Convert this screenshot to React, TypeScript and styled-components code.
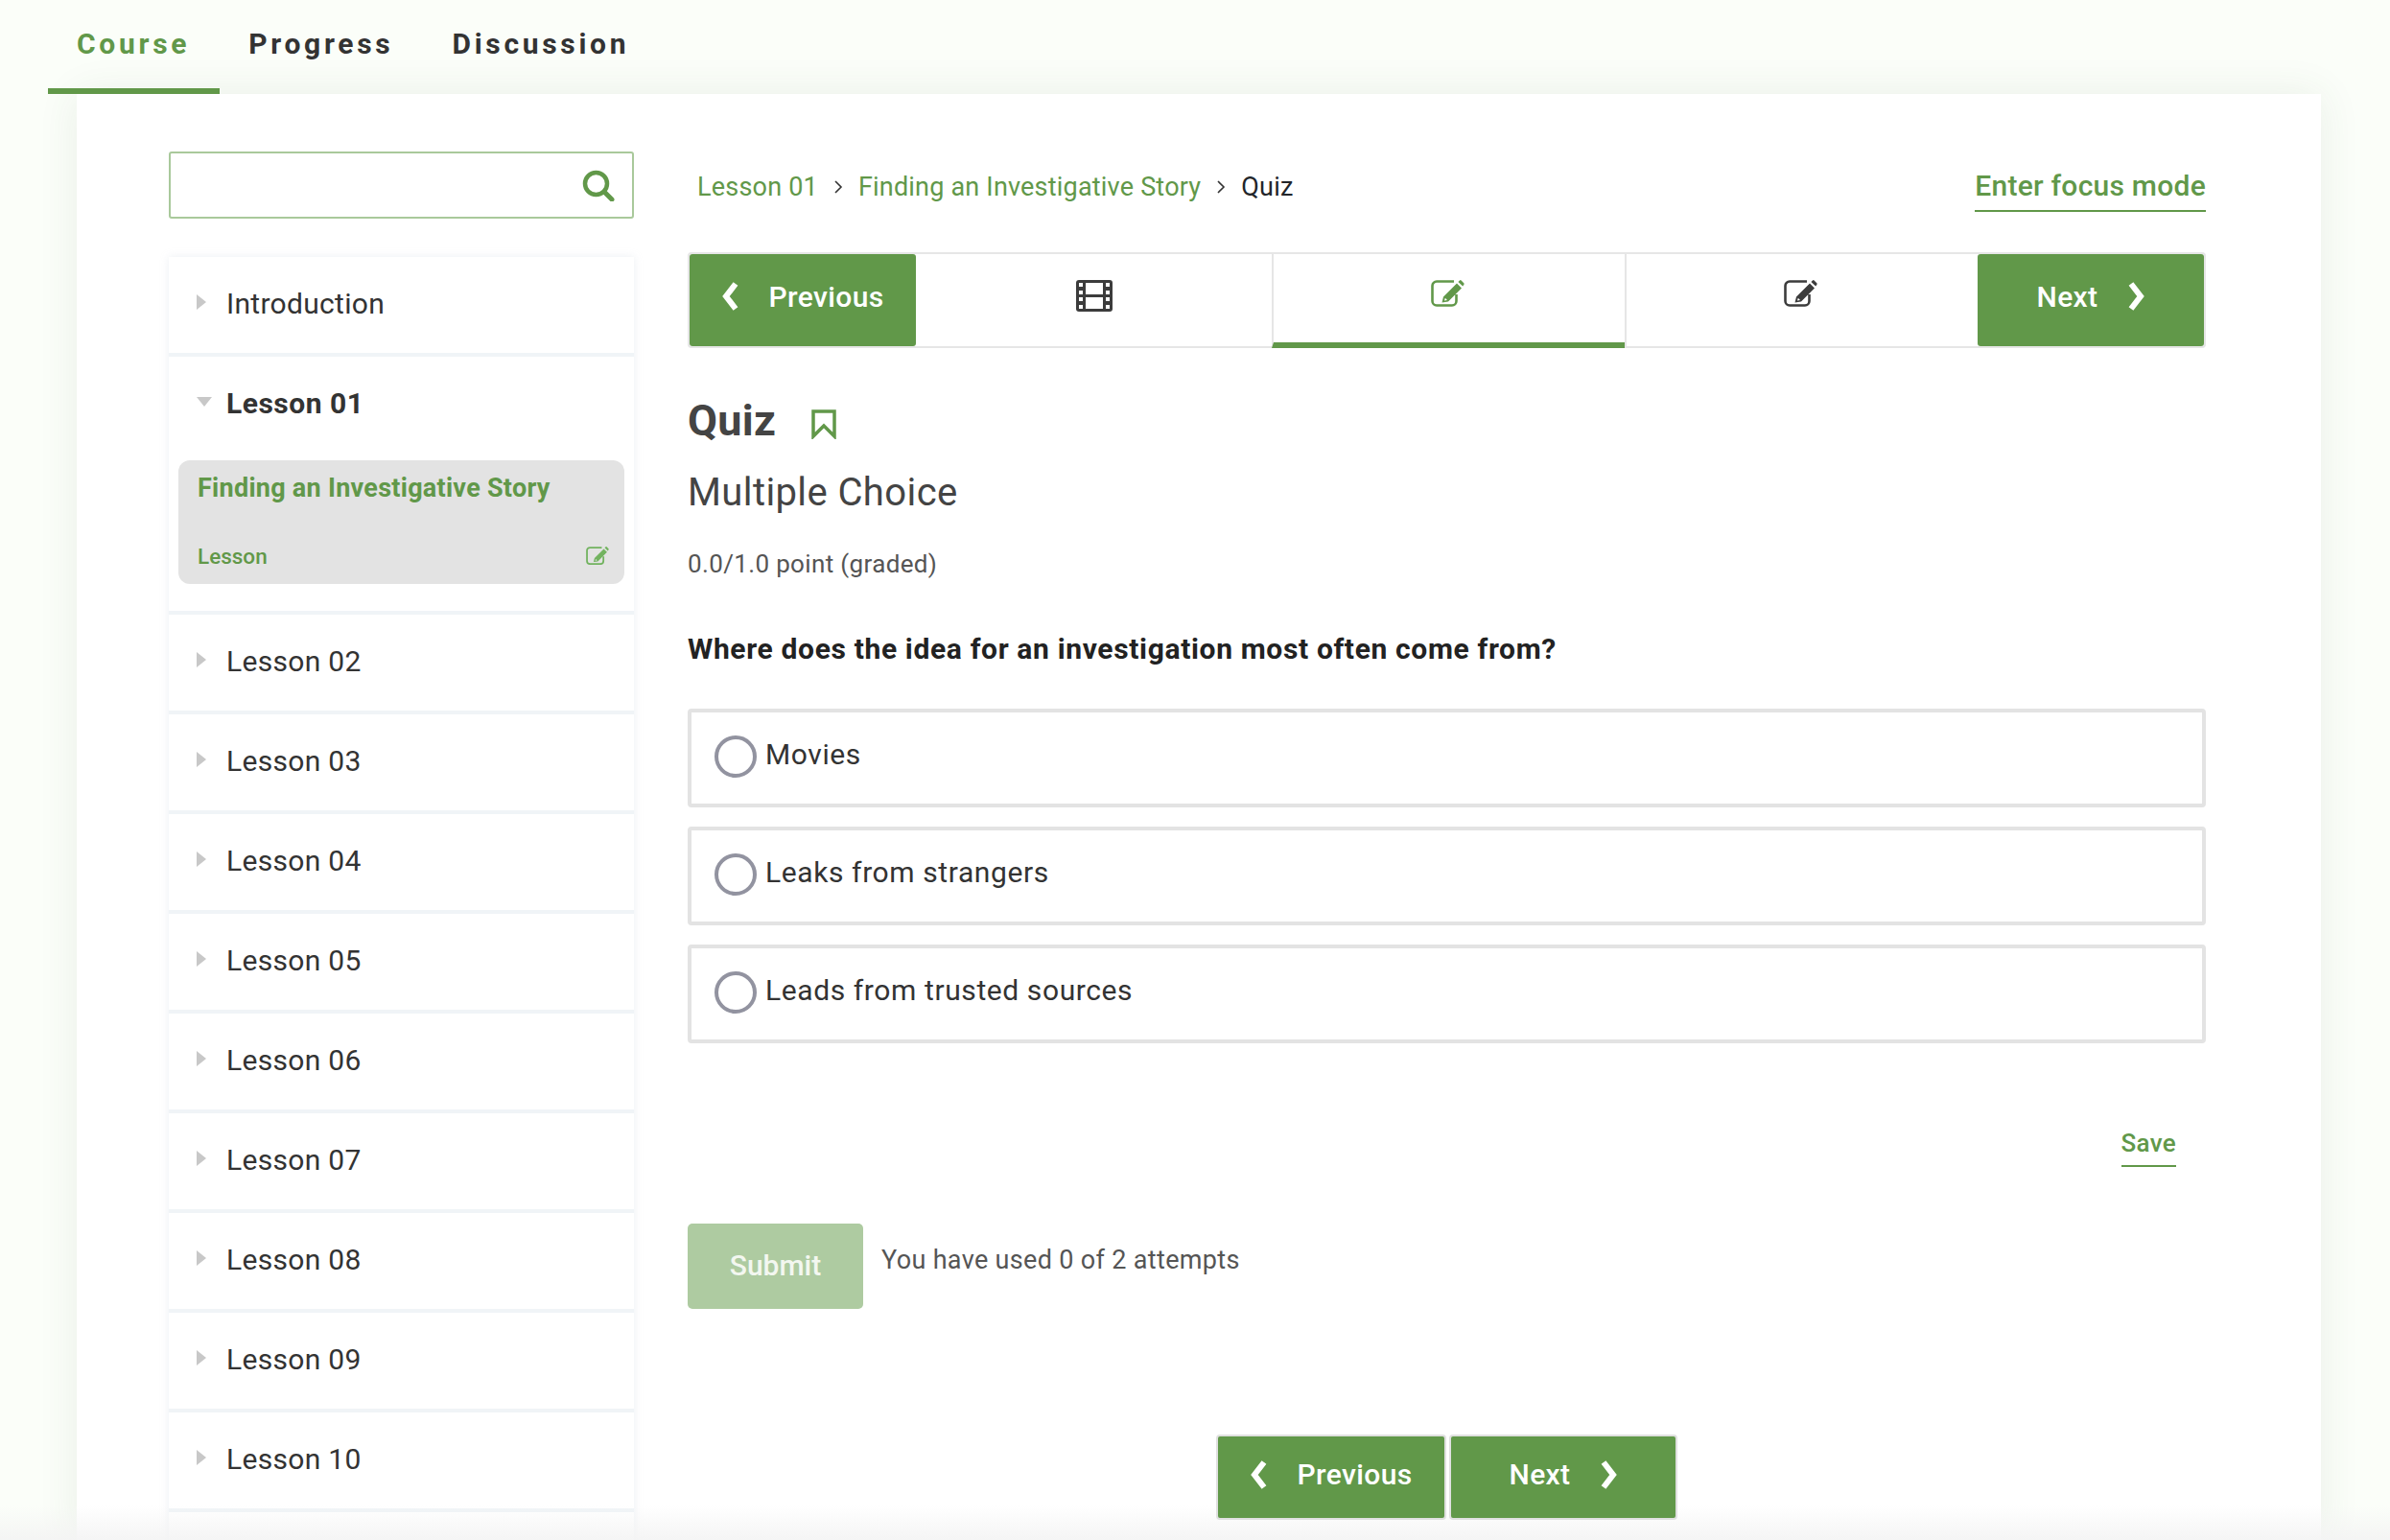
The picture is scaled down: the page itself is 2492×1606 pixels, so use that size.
import React from 'react'
import styled, { createGlobalStyle } from 'styled-components'

const green = '#619849'
const dark = '#333333'

const GlobalStyle = createGlobalStyle`
  html, body {
    margin: 0;
    padding: 0;
    background: #fbfef9;
    font-family: Roboto, "Liberation Sans", sans-serif;
  }
  * {
    box-sizing: border-box;
  }
`

const Page = styled.div`
  position: relative;
  height: 1606px;
  overflow: hidden;
`

const BottomFade = styled.div`
  position: absolute;
  left: 0;
  right: 0;
  bottom: 0;
  height: 36px;
  background: linear-gradient(rgba(243, 243, 243, 0), rgba(243, 243, 243, 0.85));
  pointer-events: none;
`

const TabBar = styled.nav`
  position: relative;
  z-index: 1;
  display: flex;
  height: 98px;
  padding-left: 50px;
`

const Tab = styled.a<{ $active?: boolean }>`
  display: block;
  height: 98px;
  padding: 26px 31px 0 30px;
  font-size: 30px;
  line-height: 40px;
  font-weight: 700;
  letter-spacing: 3.7px;
  color: ${({ $active }) => ($active ? green : dark)};
  border-bottom: 6px solid ${({ $active }) => ($active ? green : 'transparent')};
`

const Panel = styled.div`
  display: flex;
  gap: 56px;
  margin: 0 72px 0 80px;
  padding: 60px 120px 0 96px;
  height: 1508px;
  background: #ffffff;
  box-shadow: 0 0 40px rgba(60, 90, 60, 0.09);
`

const Sidebar = styled.aside`
  flex: 0 0 485px;
`

const SearchBox = styled.div`
  display: flex;
  align-items: center;
  height: 70px;
  padding-right: 18px;
  border: 2px solid #a9c99b;
  border-radius: 3px;
`

const SearchInput = styled.input`
  flex: 1;
  min-width: 0;
  height: 100%;
  border: none;
  outline: none;
  background: transparent;
`

const LessonList = styled.div`
  display: flex;
  flex-direction: column;
  gap: 4px;
  margin-top: 40px;
  background: #f0f4f7;
  box-shadow: 0 0 8px rgba(200, 210, 220, 0.35);
`

const LessonItem = styled.div`
  min-height: 100px;
  background: #ffffff;
`

const LessonHead = styled.div<{ $open?: boolean }>`
  display: flex;
  align-items: center;
  height: 96px;
  padding-left: 29px;
  font-size: 30px;
  font-weight: ${({ $open }) => ($open ? 700 : 400)};
  letter-spacing: ${({ $open }) => ($open ? '0.5px' : '0.3px')};
  color: ${dark};
`

const Caret = styled.span<{ $open?: boolean }>`
  flex: 0 0 0;
  width: 0;
  height: 0;
  margin-top: -3px;
  border-style: solid;
  border-color: transparent;
  ${({ $open }) =>
    $open
      ? `border-width: 10px 8px 0 8px; border-top-color: #c8c8c8; margin-right: 15px;`
      : `border-width: 8.5px 0 8.5px 10px; border-left-color: #c8c8c8; margin-right: 21px;`}
`

const ActiveUnit = styled.div`
  margin: 12px 10px 28px;
  height: 129px;
  padding: 11px 16px 0 20px;
  border-radius: 12px;
  background: #e3e3e3;
`

const UnitTitle = styled.div`
  font-size: 27px;
  line-height: 36px;
  font-weight: 700;
  letter-spacing: 0.27px;
  color: ${green};
`

const UnitFoot = styled.div`
  display: flex;
  justify-content: space-between;
  align-items: flex-start;
  margin-top: 36px;
  font-size: 22.5px;
  line-height: 34px;
  font-weight: 500;
  color: ${green};
`

const UnitIcon = styled.span`
  display: block;
  margin-top: 1px;
  color: #72b35f;
`

const Main = styled.main`
  flex: 1;
  min-width: 0;
`

const HeaderRow = styled.div`
  display: flex;
  justify-content: space-between;
  align-items: center;
  height: 74px;
  margin-bottom: 31px;
  padding-left: 10px;
`

const Crumbs = styled.div`
  display: flex;
  align-items: center;
  font-size: 27px;
  letter-spacing: 0.2px;
  color: ${green};
`

const CrumbSep = styled.svg`
  width: 10px;
  height: 16px;
  margin: 0 16px;
  fill: none;
  stroke: ${dark};
  stroke-width: 1.6;
`

const CrumbCurrent = styled.span`
  color: #22252a;
`

const FocusLink = styled.a`
  display: block;
  font-size: 30px;
  line-height: 44px;
  font-weight: 500;
  letter-spacing: 0.25px;
  color: ${green};
  padding: 2px 0 3px;
  border-bottom: 2px solid ${green};
`

const Strip = styled.div`
  display: grid;
  grid-template-columns: 236px 371px 368px 1fr 236px;
  height: 100px;
  border: 2px solid #e6e6e6;
  border-radius: 4px;
`

const NavButton = styled.a`
  display: flex;
  justify-content: center;
  align-items: center;
  gap: 30px;
  padding-bottom: 8px;
  background: ${green};
  border-radius: 3px;
  color: #ffffff;
  font-size: 30px;
  font-weight: 500;
  letter-spacing: 0.4px;
`

const StripCell = styled.a<{ $active?: boolean; $first?: boolean }>`
  display: flex;
  justify-content: center;
  padding: 27px ${({ $first }) => ($first ? '0' : '4px')} 0 0;
  color: ${({ $active }) => ($active ? green : '#3c3c3c')};
  border-left: ${({ $first }) => ($first ? 'none' : '2px solid #e6e6e6')};
  ${({ $active }) =>
    $active ? `border-bottom: 6px solid ${green}; margin-bottom: -2px;` : ''}
`

const Chevron = styled.svg`
  flex: 0 0 19px;
  width: 19px;
  height: 30px;
  fill: none;
  stroke: #ffffff;
  stroke-width: 6;
`

const Title = styled.h1`
  display: flex;
  align-items: center;
  gap: 36px;
  margin: 50px 0 0;
  font-size: 45px;
  line-height: 52px;
  font-weight: 700;
  letter-spacing: 0.3px;
  color: #444444;
`

const Bookmark = styled.svg`
  width: 28px;
  height: 31px;
  margin-top: 6px;
  fill: none;
  stroke: ${green};
  stroke-width: 3.5;
`

const Subtitle = styled.h2`
  margin: 25px 0 0;
  font-size: 40px;
  line-height: 48px;
  font-weight: 400;
  letter-spacing: 0.4px;
  color: #444444;
`

const Score = styled.div`
  margin-top: 34px;
  font-size: 26px;
  line-height: 32px;
  letter-spacing: 0.35px;
  color: #555555;
`

const Question = styled.div`
  margin-top: 53px;
  font-size: 30px;
  line-height: 40px;
  font-weight: 700;
  letter-spacing: 0.65px;
  color: #222222;
`

const Options = styled.div`
  display: flex;
  flex-direction: column;
  gap: 20px;
  margin-top: 42px;
`

const Option = styled.label`
  display: flex;
  align-items: flex-start;
  gap: 9px;
  height: 103px;
  padding: 24px 0 0 24px;
  border: 4px solid #e3e3e3;
  border-radius: 4px;
  font-size: 30px;
  line-height: 40px;
  letter-spacing: 0.6px;
  color: ${dark};
`

const Radio = styled.span`
  flex: 0 0 44px;
  height: 44px;
  border: 4px solid #9293a0;
  border-radius: 50%;
`

const SaveRow = styled.div`
  display: flex;
  justify-content: flex-end;
  margin-top: 87px;
  padding-right: 31px;
`

const SaveLink = styled.a`
  display: block;
  font-size: 26px;
  line-height: 34px;
  font-weight: 500;
  letter-spacing: 0.3px;
  color: ${green};
  padding-bottom: 6px;
  border-bottom: 2px solid ${green};
`

const SubmitRow = styled.div`
  display: flex;
  align-items: flex-start;
  gap: 19px;
  margin-top: 59px;
`

const SubmitButton = styled.button`
  width: 183px;
  height: 89px;
  padding: 0 0 3px;
  border: none;
  border-radius: 5px;
  background: #aecba1;
  color: #f3f7f0;
  font-family: inherit;
  font-size: 30px;
  font-weight: 500;
`

const Attempts = styled.span`
  margin-top: 21px;
  font-size: 27px;
  line-height: 34px;
  letter-spacing: 0.33px;
  color: #555555;
`

const BottomNav = styled.div`
  position: relative;
  z-index: 2;
  display: flex;
  justify-content: center;
  gap: 3px;
  margin-top: 131px;
`

const BottomButton = styled(NavButton)`
  width: 240px;
  height: 89px;
  border: 2px solid #e0e0e0;
  border-radius: 4px;
  padding-bottom: 6px;
`

const BottomButtonNext = styled(BottomButton)`
  width: 238px;
`

const lessons = ['02', '03', '04', '05', '06', '07', '08', '09', '10']

const ChevronLeft = () => (
  <Chevron viewBox="0 0 19 30">
    <path d="M15 2 L5 15 L15 28" />
  </Chevron>
)

const ChevronRight = () => (
  <Chevron viewBox="0 0 19 30">
    <path d="M4 2 L14 15 L4 28" />
  </Chevron>
)

const SearchIcon = () => (
  <svg width="34" height="33" viewBox="0 0 34 33" fill="none" stroke={green}>
    <circle cx="14.5" cy="14.5" r="11.5" strokeWidth="4.5" />
    <path d="M23 23 L31 31" strokeWidth="5" strokeLinecap="round" />
  </svg>
)

const FilmIcon = () => (
  <svg width="38" height="33" viewBox="0 0 38 33">
    <rect width="38" height="33" rx="3" fill="#3c3c3c" />
    <g fill="#ffffff">
      <rect x="3" y="3" width="4" height="4" />
      <rect x="3" y="11" width="4" height="4" />
      <rect x="3" y="18" width="4" height="4" />
      <rect x="3" y="26" width="4" height="4" />
      <rect x="31" y="3" width="4" height="4" />
      <rect x="31" y="11" width="4" height="4" />
      <rect x="31" y="18" width="4" height="4" />
      <rect x="31" y="26" width="4" height="4" />
      <rect x="10" y="3" width="18" height="12" />
      <rect x="10" y="18" width="18" height="12" />
    </g>
  </svg>
)

// pencil-in-square, drawn because the package versions have a thin pencil
const EditIcon = ({ width = 35 }: { width?: number }) => (
  <svg width={width} height={(width * 28) / 35} viewBox="0 0 35 28">
    <path
      d="M24 1.5 H6 a4.5 4.5 0 0 0 -4.5 4.5 V22 a4.5 4.5 0 0 0 4.5 4.5 H22 a4.5 4.5 0 0 0 4.5 -4.5 V15"
      fill="none"
      stroke="currentColor"
      strokeWidth="2.6"
    />
    <path
      fillRule="evenodd"
      fill="currentColor"
      d="M27 3.5 L32 8.5 L18 22.5 L11.5 23.5 L13 17.5 Z M14.8 18.8 L14 21.5 L17 21 Z"
    />
    <path fill="currentColor" d="M28.4 2 L30 .4 Q30.8 -.2 31.6 .5 L34.3 3.2 Q35 4 34.4 4.8 L33.2 6.6 Z" />
  </svg>
)

export default function App() {
  return (
    <Page>
      <GlobalStyle />
      <TabBar>
        <Tab $active>Course</Tab>
        <Tab>Progress</Tab>
        <Tab>Discussion</Tab>
      </TabBar>
      <Panel>
        <Sidebar>
          <SearchBox>
            <SearchInput aria-label="Search" />
            <SearchIcon />
          </SearchBox>
          <LessonList>
            <LessonItem>
              <LessonHead>
                <Caret />
                Introduction
              </LessonHead>
            </LessonItem>
            <LessonItem>
              <LessonHead $open>
                <Caret $open />
                Lesson 01
              </LessonHead>
              <ActiveUnit>
                <UnitTitle>Finding an Investigative Story</UnitTitle>
                <UnitFoot>
                  Lesson
                  <UnitIcon>
                    <EditIcon width={24} />
                  </UnitIcon>
                </UnitFoot>
              </ActiveUnit>
            </LessonItem>
            {lessons.map((lesson) => (
              <LessonItem key={lesson}>
                <LessonHead>
                  <Caret />
                  Lesson {lesson}
                </LessonHead>
              </LessonItem>
            ))}
            <LessonItem />
          </LessonList>
        </Sidebar>
        <Main>
          <HeaderRow>
            <Crumbs>
              Lesson 01
              <CrumbSep viewBox="0 0 10 16">
                <path d="M2 2 L8 8 L2 14" />
              </CrumbSep>
              Finding an Investigative Story
              <CrumbSep viewBox="0 0 10 16">
                <path d="M2 2 L8 8 L2 14" />
              </CrumbSep>
              <CrumbCurrent>Quiz</CrumbCurrent>
            </Crumbs>
            <FocusLink>Enter focus mode</FocusLink>
          </HeaderRow>
          <Strip>
            <NavButton>
              <ChevronLeft />
              Previous
            </NavButton>
            <StripCell $first>
              <FilmIcon />
            </StripCell>
            <StripCell $active>
              <EditIcon />
            </StripCell>
            <StripCell>
              <EditIcon />
            </StripCell>
            <NavButton>
              Next
              <ChevronRight />
            </NavButton>
          </Strip>
          <Title>
            Quiz
            <Bookmark viewBox="0 0 28 31">
              <path d="M3 2 H25 V28 L14 17 L3 28 Z" />
            </Bookmark>
          </Title>
          <Subtitle>Multiple Choice</Subtitle>
          <Score>0.0/1.0 point (graded)</Score>
          <Question>Where does the idea for an investigation most often come from?</Question>
          <Options>
            <Option>
              <Radio />
              Movies
            </Option>
            <Option>
              <Radio />
              Leaks from strangers
            </Option>
            <Option>
              <Radio />
              Leads from trusted sources
            </Option>
          </Options>
          <SaveRow>
            <SaveLink>Save</SaveLink>
          </SaveRow>
          <SubmitRow>
            <SubmitButton disabled>Submit</SubmitButton>
            <Attempts>You have used 0 of 2 attempts</Attempts>
          </SubmitRow>
          <BottomNav>
            <BottomButton>
              <ChevronLeft />
              Previous
            </BottomButton>
            <BottomButtonNext>
              Next
              <ChevronRight />
            </BottomButtonNext>
          </BottomNav>
        </Main>
      </Panel>
      <BottomFade />
    </Page>
  )
}
